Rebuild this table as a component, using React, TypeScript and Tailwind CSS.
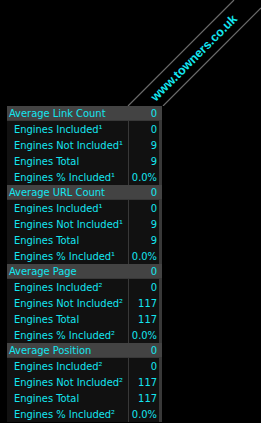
import React from 'react';

interface Section {
  title: string;
  total: string;
  rows: { label: string; value: string }[];
}

const sup1 = '\u00b9';
const sup2 = '\u00b2';

const sections: Section[] = [
  {
    title: 'Average Link Count',
    total: '0',
    rows: [
      { label: `Engines Included${sup1}`, value: '0' },
      { label: `Engines Not Included${sup1}`, value: '9' },
      { label: 'Engines Total', value: '9' },
      { label: `Engines % Included${sup1}`, value: '0.0%' },
    ],
  },
  {
    title: 'Average URL Count',
    total: '0',
    rows: [
      { label: `Engines Included${sup1}`, value: '0' },
      { label: `Engines Not Included${sup1}`, value: '9' },
      { label: 'Engines Total', value: '9' },
      { label: `Engines % Included${sup1}`, value: '0.0%' },
    ],
  },
  {
    title: 'Average Page',
    total: '0',
    rows: [
      { label: `Engines Included${sup2}`, value: '0' },
      { label: `Engines Not Included${sup2}`, value: '117' },
      { label: 'Engines Total', value: '117' },
      { label: `Engines % Included${sup2}`, value: '0.0%' },
    ],
  },
  {
    title: 'Average Position',
    total: '0',
    rows: [
      { label: `Engines Included${sup2}`, value: '0' },
      { label: `Engines Not Included${sup2}`, value: '117' },
      { label: 'Engines Total', value: '117' },
      { label: `Engines % Included${sup2}`, value: '0.0%' },
    ],
  },
];

const Banner: React.FC = () => (
  <svg width="261" height="106" className="block">
    <line x1="128" y1="106" x2="234" y2="0" stroke="#6a6a6a" strokeWidth="1.2" />
    <line x1="163" y1="106" x2="261" y2="8" stroke="#6a6a6a" strokeWidth="1.2" />
    <text
      x="194"
      y="58"
      transform="rotate(-45 194 58)"
      textAnchor="middle"
      dominantBaseline="central"
      fill="#14e6f0"
      fontFamily="'Liberation Sans', Arial, sans-serif"
      fontWeight="bold"
      fontSize="12.5"
    >
      www.towners.co.uk
    </text>
  </svg>
);

export default function App() {
  return (
    <div
      className="w-[261px] h-[423px] overflow-hidden bg-black text-[#14e6f0] text-[11px] leading-none"
      style={{ fontFamily: "'DejaVu Sans Condensed', 'DejaVu Sans', Verdana, sans-serif", fontStretch: 'condensed' }}
    >
      <Banner />
      <div className="ml-[7px] w-[155px] bg-[#383838]">
        {sections.map((s) => (
          <div key={s.title}>
            <div className="h-[15px] flex items-center justify-between bg-[#434343] pl-[2px] pr-[5px] border-b border-[#383838]">
              <span>{s.title}</span>
              <span>{s.total}</span>
            </div>
            <div className="flex pr-[3px]">
              <div className="w-[121px] bg-[#111111]">
                {s.rows.map((r) => (
                  <div key={r.label} className="h-[16px] flex items-center pl-[7px]">
                    {r.label}
                  </div>
                ))}
              </div>
              <div className="ml-[1px] flex-1 bg-[#111111]">
                {s.rows.map((r) => (
                  <div key={r.label} className="h-[16px] flex items-center justify-end pr-[2px]">
                    {r.value}
                  </div>
                ))}
              </div>
            </div>
          </div>
        ))}
      </div>
    </div>
  );
}
